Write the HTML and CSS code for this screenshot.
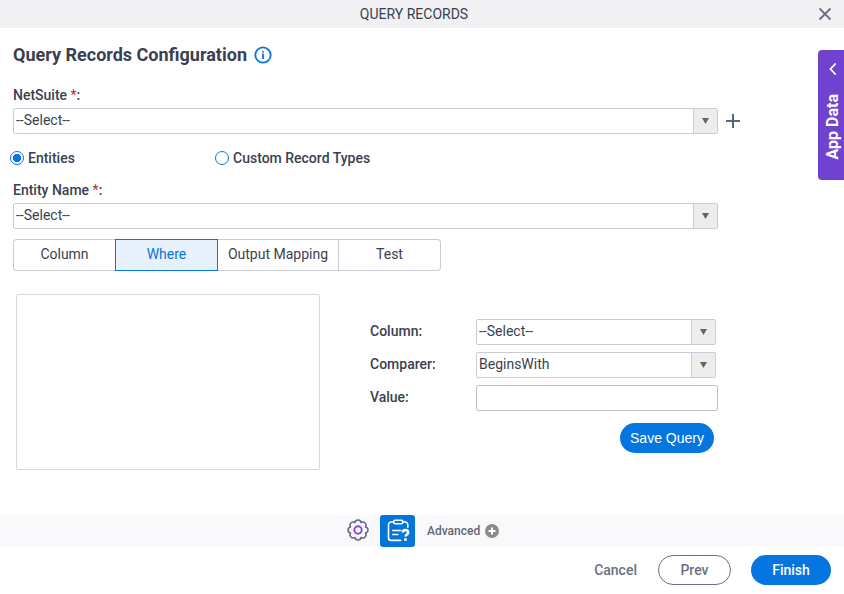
FILE: index.html
```html
<!DOCTYPE html>
<html lang="en">
<head>
<meta charset="utf-8">
<title>Query Records</title>
<link rel="stylesheet" href="styles.css">
</head>
<body>
<div class="dialog">
  <header class="titlebar">
    <span class="titlebar-text">QUERY RECORDS</span>
    <svg class="close" width="14" height="14" viewBox="0 0 14 14"><path d="M1.5 1.5l11 11M12.5 1.5l-11 11"/></svg>
  </header>

  <main class="content">
    <h1 class="heading">Query Records Configuration
      <svg class="info" width="18" height="18" viewBox="0 0 18 18"><circle cx="9" cy="9" r="7.7"/><path d="M9 7.6v5.4M9 4.9v1.7"/></svg>
    </h1>

    <label class="label">NetSuite <span class="req">*</span>:</label>
    <div class="row">
      <div class="select wide"><span class="value">--Select--</span><span class="arrow"></span></div>
      <svg class="add" width="14" height="14" viewBox="0 0 14 14"><path d="M7 0v14M0 7h14"/></svg>
    </div>

    <div class="radios">
      <label class="radio"><span class="dot on"></span>Entities</label>
      <label class="radio"><span class="dot"></span>Custom Record Types</label>
    </div>

    <label class="label">Entity Name <span class="req">*</span>:</label>
    <div class="row">
      <div class="select wide"><span class="value">--Select--</span><span class="arrow"></span></div>
    </div>

    <nav class="tabs">
      <span class="tab">Column</span>
      <span class="tab active">Where</span>
      <span class="tab mapping">Output Mapping</span>
      <span class="tab">Test</span>
    </nav>

    <section class="where">
      <div class="querybox"></div>
      <div class="form">
        <span class="form-label">Column:</span>
        <div class="select"><span class="value">--Select--</span><span class="arrow"></span></div>
        <span class="form-label">Comparer:</span>
        <div class="select"><span class="value">BeginsWith</span><span class="arrow"></span></div>
        <span class="form-label">Value:</span>
        <input class="input" type="text" aria-label="Value">
        <button class="btn save">Save Query</button>
      </div>
    </section>
  </main>

  <div class="toolbar">
    <svg class="gear" width="22" height="22" viewBox="0 0 22 22">
      <path d="M18.390 14.060A3.100 3.100 0 0 1 14.060 18.390A3.100 3.100 0 0 1 7.940 18.390A3.100 3.100 0 0 1 3.610 14.060A3.100 3.100 0 0 1 3.610 7.940A3.100 3.100 0 0 1 7.940 3.610A3.100 3.100 0 0 1 14.060 3.610A3.100 3.100 0 0 1 18.390 7.940A3.100 3.100 0 0 1 18.390 14.060z"/>
      <circle cx="11" cy="11" r="3.7"/>
    </svg>
    <span class="tool-active">
      <svg width="23" height="23" viewBox="0 0 23 23">
        <path d="M6.500 3H4.200A2.700 2.700 0 0 0 1.500 5.700v13a2.700 2.700 0 0 0 2.700 2.700h9.300M16 3h2.100a2.700 2.700 0 0 1 2.700 2.700v2.600"/>
        <path d="M8 1.200h6.500a1.300 1.300 0 0 1 1.300 1.300v.7a1.600 1.600 0 0 1-1.600 1.600H8.300a1.600 1.600 0 0 1-1.600-1.600v-.7A1.300 1.300 0 0 1 8 1.200z"/>
        <path d="M5.800 11.500h7.700M5.800 15.500h5"/>
        <path class="q" d="M15.900 13.400c0-1.600 1-2.400 2.500-2.400s2.700.9 2.700 2.400c0 2.200-2.500 2-2.500 4.200M18.500 19.200v2.600"/>
      </svg>
    </span>
    <span class="advanced">Advanced</span>
    <svg class="plus" width="14" height="14" viewBox="0 0 14 14"><circle cx="7" cy="7" r="7"/><path d="M7 3.500v7M3.500 7h7"/></svg>
  </div>

  <footer class="footer">
    <span class="cancel">Cancel</span>
    <button class="btn prev">Prev</button>
    <button class="btn finish">Finish</button>
  </footer>

  <aside class="appdata">
    <svg width="8" height="12" viewBox="0 0 8 12"><path d="M6.700 .5L1.500 6l5.200 5.500"/></svg>
    <span class="appdata-text">App Data</span>
  </aside>
</div>
</body>
</html>
```
FILE: styles.css
```css
* { box-sizing: border-box; }
body {
  margin: 0;
  background: #fff;
  color: #3a3f51;
  font: 14px/20px Roboto, "Liberation Sans", sans-serif;
}
svg { display: block; fill: none; flex: none; }
.dialog {
  position: relative;
  display: flex;
  flex-direction: column;
  width: 844px;
  height: 594px;
  overflow: hidden;
}
.titlebar {
  display: flex;
  align-items: center;
  height: 28px;
  padding: 0 12px 0 16px;
  background: #f1f1f4;
}
.titlebar-text { flex: 1; padding-right: 6px; text-align: center; }
.close { stroke: #697082; stroke-width: 1.8; }
.content { height: 487px; padding: 15px 13px 0; }
.heading {
  display: flex;
  align-items: center;
  gap: 7.4px;
  height: 24px;
  margin: 0 0 18px;
  font-size: 18px;
  font-weight: 700;
}
.info { stroke: #0874df; stroke-width: 1.8; }
.label { display: block; height: 23px; font-weight: 500; }
.req { color: #a83238; font-weight: 400; }
.row { display: flex; align-items: center; gap: 8px; }
.add { stroke: #5d6680; stroke-width: 2; }
.select {
  display: flex;
  width: 240px;
  height: 26px;
  border: 1px solid #c9ccd4;
  border-radius: 2px;
  background: #fff;
}
.select.wide { width: 705px; }
.value { flex: 1; padding-left: 2px; line-height: 23px; }
.arrow {
  display: flex;
  align-items: center;
  justify-content: center;
  width: 24px;
  border-left: 1px solid #c9ccd4;
  background: #ededee;
}
.arrow::before {
  content: "";
  width: 7px;
  height: 6px;
  background: #6c625e;
  clip-path: polygon(0 0, 100% 0, 50% 100%);
}
.radios { display: flex; height: 46px; margin-left: -3px; padding-top: 14px; }
.radio { display: flex; gap: 4px; width: 205px; height: 20px; align-items: center; font-weight: 500; }
.dot {
  width: 14px;
  height: 14px;
  border: 1px solid #0874df;
  border-radius: 50%;
}
.dot.on { background: radial-gradient(circle, #0874df 3.8px, #fff 4.500px); }
.tabs { display: flex; height: 32px; margin-top: 10px; }
.tab {
  width: 103px;
  border: 1px solid #c9ccd4;
  border-left: 0;
  line-height: 29px;
  text-align: center;
}
.tab:first-child { border-left: 1px solid #c9ccd4; border-right: 0; border-radius: 4px 0 0 4px; width: 102px; }
.tab:last-child { border-radius: 0 4px 4px 0; width: 102px; }
.tab.mapping { width: 121px; }
.tab.active { border: 1px solid #0874df; background: #e6f1fb; color: #0874df; }
.where { display: flex; gap: 50px; margin: 23px 0 0 3px; }
.querybox { width: 304px; height: 176px; border: 1px solid #d5d8e0; border-radius: 2px; }
.form {
  display: grid;
  grid-template-columns: 106px 242px;
  grid-auto-rows: 26px;
  row-gap: 7px;
  padding-top: 25px;
}
.form-label { font-weight: 500; line-height: 24px; }
.input { width: 242px; height: 26px; border: 1px solid #bfc1c9; border-radius: 2px; }
.btn {
  height: 30px;
  padding: 0;
  border: 0;
  border-radius: 15px;
  background: #0576df;
  color: #fff;
  font: 500 14px/30px Roboto, "Liberation Sans", sans-serif;
}
.save {
  grid-column: 2;
  justify-self: end;
  width: 94px;
  margin: 5px 4px 0 0;
  font-family: "Liberation Sans", sans-serif;
  font-weight: 400;
}
.toolbar {
  display: flex;
  align-items: center;
  height: 32px;
  padding-left: 347px;
  background: #f9f9fb;
}
.gear { margin: -3px 0 0 -.4px; stroke: #626b7b; stroke-width: 1.500; stroke-linejoin: round; }
.gear circle { stroke: #8547e0; stroke-width: 1.900; }
.tool-active {
  display: flex;
  justify-content: center;
  width: 35px;
  height: 32px;
  margin: 0 12px 0 11.4px;
  padding: 4px 0 0 1px;
  border-radius: 3px;
  background: #0576d9;
}
.tool-active svg { stroke: #fff; stroke-width: 1.600; stroke-linecap: round; }
.tool-active .q { stroke-width: 2.700; stroke-linecap: butt; }
.advanced { margin-right: 5px; color: #606879; font-size: 12px; font-weight: 500; }
.plus { fill: #8c8c8c; stroke: none; }
.plus path { stroke: #fff; stroke-width: 2; }
.footer { display: flex; align-items: center; height: 47px; padding: 0 13px 2px 0; justify-content: flex-end; color: #697082; }
.cancel { margin-right: 21px; font-weight: 500; }
.prev { width: 73px; margin-right: 20px; border: 1px solid #697082; background: #fff; color: #697082; line-height: 28px; }
.finish { width: 80px; }
.appdata {
  position: absolute;
  top: 50px;
  right: 0;
  display: flex;
  flex-direction: column;
  align-items: center;
  width: 26px;
  height: 130px;
  padding: 13px 0 0 4px;
  border-radius: 4px 0 0 4px;
  background: #6f42cf;
  color: #fff;
}
.appdata svg { stroke: #fff; stroke-width: 1.800; }
.appdata-text { margin-top: 19px; font-size: 16px; font-weight: 700; writing-mode: vertical-rl; transform: rotate(180deg); }
```
